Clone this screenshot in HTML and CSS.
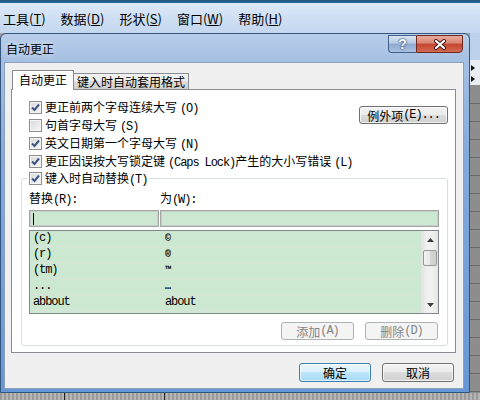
FILE: index.html
```html
<!DOCTYPE html>
<html lang="zh-CN">
<head>
  <meta charset="UTF-8">
  <meta name="viewport" content="width=device-width, initial-scale=1.0">
  <title>自动更正</title>
  <link rel="stylesheet" href="styles.css">
</head>
<body>

  <div class="menubar">
    <span class="menu">工具(<u>T</u>)</span>
    <span class="menu">数据(<u>D</u>)</span>
    <span class="menu">形状(<u>S</u>)</span>
    <span class="menu">窗口(<u>W</u>)</span>
    <span class="menu">帮助(<u>H</u>)</span>
  </div>

  <div class="main">
    <div class="dialog">
      <div class="titlebar">
        <span class="title">自动更正</span>
        <div class="caption-buttons">
          <div class="cap help">?</div>
          <div class="cap close">
            <svg width="14" height="11" viewBox="0 0 14 11">
              <path d="M3 2 L11 9 M11 2 L3 9" stroke="#3a1410" stroke-width="4" stroke-linecap="round"/>
              <path d="M3 2 L11 9 M11 2 L3 9" stroke="#fff" stroke-width="2.2" stroke-linecap="round"/>
            </svg>
          </div>
        </div>
      </div>

      <div class="client">
        <div class="tabs">
          <div class="tab active">自动更正</div>
          <div class="tab">键入时自动套用格式</div>
        </div>

        <div class="panel">
          <div class="options">
            <div class="checks">
              <div class="check">
                <span class="box"><svg width="9" height="9" viewBox="0 0 9 9"><path d="M1 4.5 L3.5 7 L8 1.5" fill="none" stroke="#3e5482" stroke-width="2"/></svg></span>
                <span>更正前两个字母连续大写<span class="en gap">(O)</span></span>
              </div>
              <div class="check">
                <span class="box"></span>
                <span>句首字母大写<span class="en gap">(S)</span></span>
              </div>
              <div class="check">
                <span class="box"><svg width="9" height="9" viewBox="0 0 9 9"><path d="M1 4.5 L3.5 7 L8 1.5" fill="none" stroke="#3e5482" stroke-width="2"/></svg></span>
                <span>英文日期第一个字母大写<span class="en gap">(N)</span></span>
              </div>
              <div class="check">
                <span class="box"><svg width="9" height="9" viewBox="0 0 9 9"><path d="M1 4.5 L3.5 7 L8 1.5" fill="none" stroke="#3e5482" stroke-width="2"/></svg></span>
                <span>更正因误按大写锁定键<span class="en gap">(Caps Lock)</span>产生的大小写错误<span class="en gap">(L)</span></span>
              </div>
            </div>
            <div class="btn exceptions">例外项<span class="en">(E)...</span></div>
          </div>

          <fieldset class="group">
            <legend class="check">
              <span class="box"><svg width="9" height="9" viewBox="0 0 9 9"><path d="M1 4.5 L3.5 7 L8 1.5" fill="none" stroke="#3e5482" stroke-width="2"/></svg></span>
              <span>键入时自动替换<span class="en">(T)</span></span>
            </legend>

            <div class="labels">
              <span class="label-replace">替换<span class="en">(R):</span></span>
              <span>为<span class="en">(W):</span></span>
            </div>

            <div class="inputs">
              <div class="field replace"><span class="caret"></span></div>
              <div class="field with"></div>
            </div>

            <div class="list">
              <div class="rows">
                <div class="row"><span class="key">(c)</span><span class="val sym">©</span></div>
                <div class="row"><span class="key">(r)</span><span class="val sym">®</span></div>
                <div class="row"><span class="key">(tm)</span><span class="val sym">™</span></div>
                <div class="row"><span class="key">...</span><span class="val sym">…</span></div>
                <div class="row"><span class="key">abbout</span><span class="val">about</span></div>
              </div>
              <div class="scrollbar">
                <div class="sb-arrow"><svg width="7" height="4" viewBox="0 0 7 4"><polygon points="0,4 3.5,0 7,4" fill="#3c3c3c"/></svg></div>
                <div class="thumb"></div>
                <div class="track"></div>
                <div class="sb-arrow"><svg width="7" height="4" viewBox="0 0 7 4"><polygon points="0,0 3.5,4 7,0" fill="#3c3c3c"/></svg></div>
              </div>
            </div>

            <div class="actions">
              <div class="btn disabled">添加<span class="en">(A)</span></div>
              <div class="btn disabled">删除<span class="en">(D)</span></div>
            </div>
          </fieldset>
        </div>

        <div class="footer">
          <div class="btn default">确定</div>
          <div class="btn">取消</div>
        </div>
      </div>
    </div>

    <div class="side">
      <div class="side-top"></div>
      <div class="side-head">
        <svg width="10" height="26" viewBox="0 0 10 26">
          <polygon points="1,5 5,8 1,11" fill="#111"/>
          <polygon points="1,16 5,19 1,22" fill="#111"/>
        </svg>
      </div>
      <div class="side-grid"></div>
    </div>
  </div>

  <div class="sheet"></div>

</body>
</html>
```

FILE: styles.css
```css
/* Reset styling */
* {
  margin: 0;
  padding: 0;
  box-sizing: border-box;
}

body {
  width: 480px;
  height: 400px;
  overflow: hidden;
  background: #9c9c9c;
  font-family: "Noto Sans CJK SC", sans-serif;
  font-size: 12px;
  color: #000;
}

/* SimSun-like half width ascii */
.en {
  font-family: "Liberation Mono", monospace;
  font-size: 12px;
  letter-spacing: -1.1px;
}

.en.gap {
  margin-left: 3px;
}

/* Menu bar of the main window */
.menubar {
  height: 33px;
  display: flex;
  align-items: center;
  gap: 15px;
  padding: 3px 0 0 3px;
  font-size: 13px;
  background: linear-gradient(#1c5b82 0, #2b6a92 3px, #dce9f8 3px, #c3d7ef 100%);
}

.main {
  display: flex;
  height: 360px;
}

/* Dialog window */
.dialog {
  width: 470px;
  display: flex;
  flex-direction: column;
  padding: 0 5px 3px 3px;
  border: 1px solid #34557e;
  border-radius: 6px 6px 0 0;
  background: linear-gradient(#b8cde8, #a5c0e3 28px, #84aadc 120px, #6797d6);
}

.titlebar {
  height: 28px;
  display: flex;
  justify-content: space-between;
  align-items: flex-start;
}

.title {
  padding: 8px 0 0 2px;
  line-height: 14px;
  text-shadow: 0 0 6px rgba(255, 255, 255, 0.9);
}

.caption-buttons {
  display: flex;
  margin: 1px 1px 0 0;
}

.cap {
  height: 18px;
  display: flex;
  align-items: center;
  justify-content: center;
  border: 1px solid #3f5f88;
}

.help {
  width: 28px;
  border-right: none;
  border-radius: 0 0 0 4px;
  background: linear-gradient(#d9e5f3, #b4c9e4 45%, #8eaad1 50%, #a9c1e1);
  color: #fff;
  font: bold 14px "Liberation Sans", sans-serif;
  text-shadow: 0 0 1px #1d3555, 0 0 2px #1d3555;
}

.close {
  width: 47px;
  border-color: #6d2a20;
  border-radius: 0 0 4px 0;
  background: linear-gradient(#eaa99b, #d98472 45%, #c3452d 50%, #d46a52);
}

/* Client area */
.client {
  flex: 1;
  background: #f0f0f0;
  border: 1px solid #8ba0bb;
  padding: 7px 7px 0 6px;
}

.tabs {
  display: flex;
  align-items: flex-end;
  height: 20px;
  margin-left: 1px;
  position: relative;
  z-index: 1;
}

.tab {
  height: 17px;
  padding: 0 3px;
  border: 1px solid #898c95;
  border-left: none;
  line-height: 15px;
  background: linear-gradient(#f2f2f2, #ebebeb 50%, #dddddd 50%, #cfcfcf);
}

.tab.active {
  height: 20px;
  padding: 0 6px;
  border-left: 1px solid #898c95;
  border-bottom: none;
  line-height: 18px;
  background: #fff;
}

.panel {
  height: 264px;
  margin-top: -1px;
  border: 1px solid #898c95;
  background: #fff;
  padding: 8px 7px 0 9px;
}

.options {
  display: flex;
  justify-content: space-between;
  align-items: flex-start;
  padding-left: 8px;
}

.check {
  display: flex;
  align-items: center;
  gap: 3px;
  height: 18px;
  white-space: nowrap;
}

.box {
  width: 13px;
  height: 13px;
  flex-shrink: 0;
  display: flex;
  align-items: center;
  justify-content: center;
  border: 1px solid #8f8f8f;
  background: linear-gradient(135deg, #d9d9d9, #f7f7f7);
  box-shadow: inset 0 0 0 1px #f4f4f4;
}

/* Buttons */
.btn {
  height: 19px;
  display: flex;
  align-items: center;
  justify-content: center;
  border: 1px solid #707070;
  border-radius: 3px;
  background: linear-gradient(#f2f2f2, #ebebeb 50%, #dddddd 50%, #cfcfcf);
  box-shadow: inset 0 0 0 1px rgba(255, 255, 255, 0.7);
  white-space: nowrap;
}

.exceptions {
  width: 89px;
  height: 18px;
  margin-top: 8px;
}

.btn.disabled {
  width: 73px;
  height: 18px;
  border-color: #adb2b5;
  background: #f4f4f4;
  box-shadow: none;
  color: #838383;
}

.btn.default {
  border-color: #3c7fb1;
  background: linear-gradient(#eaf6fd, #d9f0fc 50%, #bee6fd 50%, #a7d9f5);
  box-shadow: inset 0 0 0 1px rgba(255, 255, 255, 0.6);
}

/* Replace group */
.group {
  margin-top: -1px;
  border: 1px solid #d5dfe5;
  border-radius: 3px;
  padding: 0 8px 5px 7px;
}

.group legend {
  padding: 0 2px;
  margin-left: -2px;
}

.labels {
  display: flex;
  margin-top: 4px;
  line-height: 14px;
}

.label-replace {
  width: 131px;
}

.inputs {
  display: flex;
  gap: 1px;
  margin-top: 3px;
}

.field {
  height: 17px;
  display: flex;
  align-items: center;
  padding-left: 3px;
  border: 1px solid #a5a5a5;
  box-shadow: inset 0 0 0 1px #c6cfc7;
  background: #cde8d0;
}

.replace {
  width: 130px;
}

.with {
  flex: 1;
}

.caret {
  width: 1px;
  height: 12px;
  background: #000;
}

.list {
  display: flex;
  height: 84px;
  margin-top: 3px;
  border: 1px solid #82878f;
  background: #cde8d0;
}

.rows {
  flex: 1;
  overflow: hidden;
}

.row {
  display: flex;
  height: 16px;
  border-bottom: 1px solid #dbe1db;
  line-height: 15px;
  font-family: "Liberation Mono", monospace;
  font-size: 12px;
  letter-spacing: -1.1px;
}

.key {
  width: 132px;
  padding-left: 3px;
  border-right: 1px solid #dcdcdc;
}

.val {
  padding-left: 3px;
}

.sym {
  font-weight: bold;
  font-size: 10px;
}

.scrollbar {
  width: 17px;
  display: flex;
  flex-direction: column;
  border-left: 1px solid #e6e6e6;
  background: linear-gradient(90deg, #e3e3e3, #f0f0f0 30%, #f0f0f0 70%, #e3e3e3);
}

.sb-arrow {
  height: 17px;
  display: flex;
  align-items: center;
  justify-content: center;
}

.thumb {
  height: 16px;
  margin: 2px 1px 0;
  border: 1px solid #979797;
  border-radius: 2px;
  background: linear-gradient(90deg, #f3f3f3, #e6e6e6 50%, #d6d6d6 50%, #cfcfcf);
}

.track {
  flex: 1;
}

.actions {
  display: flex;
  justify-content: flex-end;
  gap: 11px;
  margin-top: 8px;
  padding-right: 1px;
}

.footer {
  display: flex;
  justify-content: flex-end;
  gap: 11px;
  margin-top: 10px;
  padding-right: 2px;
}

.footer .btn {
  width: 72px;
}

/* Spreadsheet behind the dialog */
.side {
  flex: 1;
  display: flex;
  flex-direction: column;
}

.side-top {
  height: 27px;
  background: #bcd2ec;
}

.side-head {
  height: 26px;
  background: #e9edf2;
  border-bottom: 1px solid #8a8a8a;
}

.side-grid {
  flex: 1;
  background: repeating-linear-gradient(#8d8d8d 0 17px, #6a6a6a 17px 18px);
}

.sheet {
  height: 7px;
  background:
    linear-gradient(90deg, transparent 64px, #222 64px 65px, transparent 65px 164px, #222 164px 165px, transparent 165px),
    repeating-linear-gradient(90deg, #9a9a9a 0 2px, #b5b5b5 2px 4px);
}
```
